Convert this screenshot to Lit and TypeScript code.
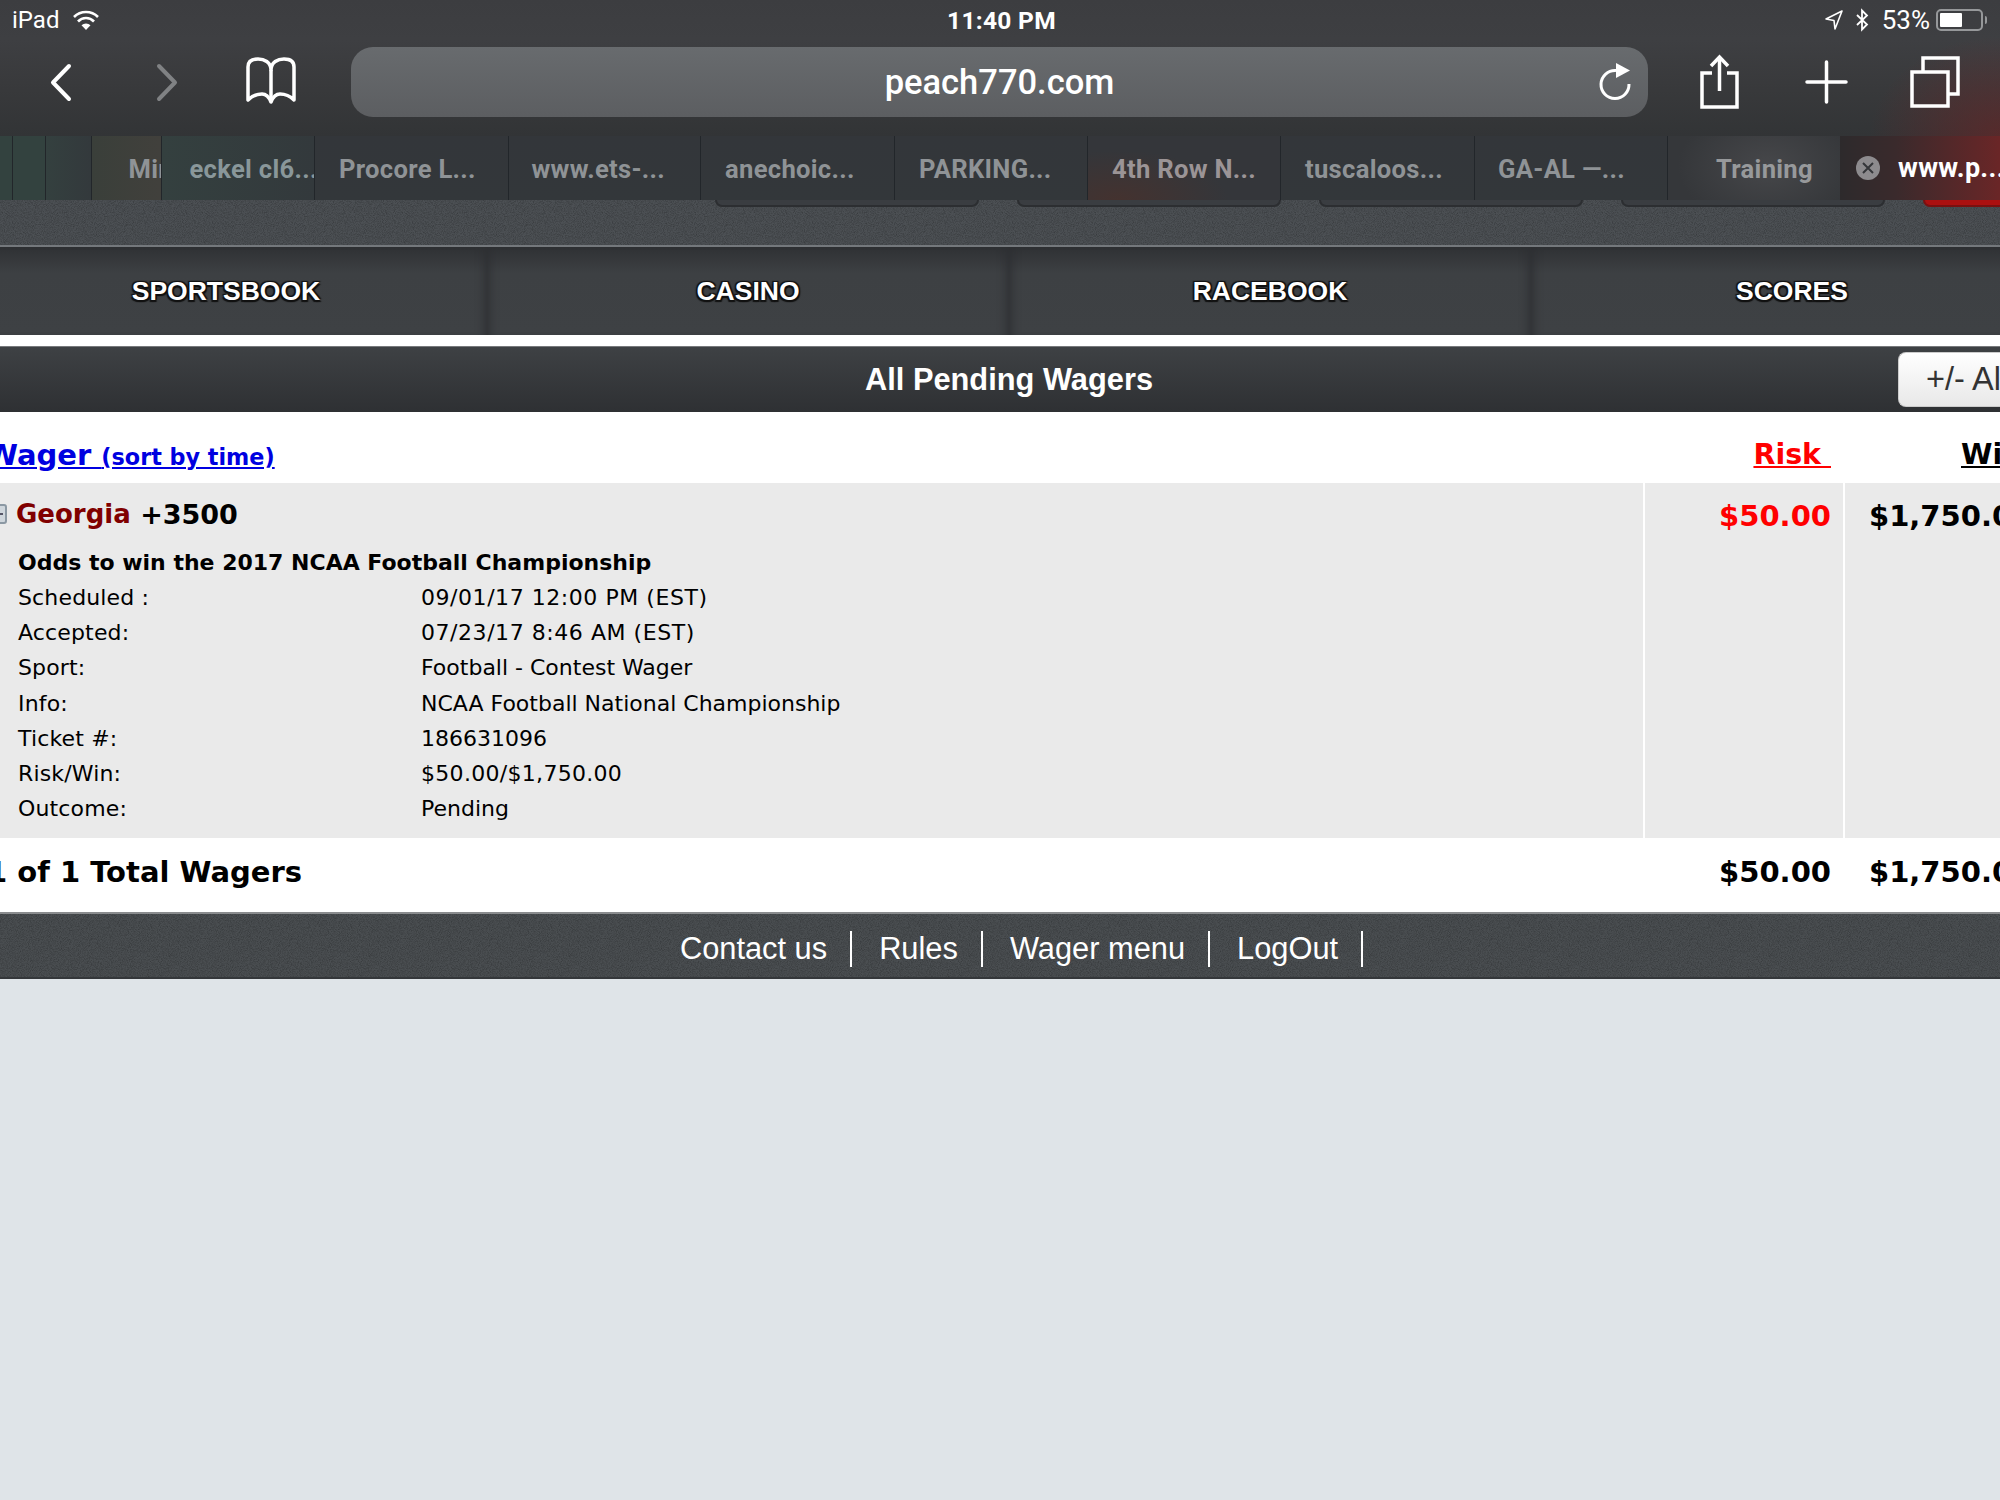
import { LitElement, html, css } from "lit";
import { customElement } from "lit/decorators.js";

interface Tab { text: string; w: number; pad: number; cls?: string; }

const TABS: Tab[] = [
  { text: "", w: 13, pad: 0, cls: "g1" },
  { text: "", w: 33, pad: 0, cls: "g1" },
  { text: "", w: 45.5, pad: 0, cls: "g2" },
  { text: "Mini", w: 70, pad: 37, cls: "g3" },
  { text: "eckel cl6...", w: 153.5, pad: 28, cls: "g2" },
  { text: "Procore L...", w: 193.5, pad: 24 },
  { text: "www.ets-...", w: 192.5, pad: 23 },
  { text: "anechoic...", w: 194, pad: 24 },
  { text: "PARKING...", w: 193, pad: 24 },
  { text: "4th Row N...", w: 193, pad: 24, cls: "r1" },
  { text: "tuscaloos...", w: 194, pad: 24 },
  { text: "GA-AL —...", w: 193, pad: 23 },
  { text: "Training", w: 172, pad: 48, cls: "lit" },
];

const DETAILS: [string, string, string][] = [
  ["Scheduled :", "09/01/17 12:00 PM (EST)", "date"],
  ["Accepted:", "07/23/17 8:46 AM (EST)", "date"],
  ["Sport:", "Football - Contest Wager", ""],
  ["Info:", "NCAA Football National Championship", ""],
  ["Ticket #:", "186631096", ""],
  ["Risk/Win:", "$50.00/$1,750.00", "money"],
  ["Outcome:", "Pending", ""],
];

@customElement("app-root")
export class AppRoot extends LitElement {
  static styles = css`
    :host { display: block; width: 2000px; height: 1500px; overflow: hidden; background: #dfe4e8; font-family: "DejaVu Sans", sans-serif; color: #000; }
    svg { display: block; flex: none; overflow: visible; }

    .chrome { background:
        radial-gradient(ellipse 130px 100px at 2000px 136px, rgba(130,30,30,.45), rgba(130,30,30,0)),
        linear-gradient(#3c3d40 0, #3e3f42 40px, #38393b 90px, #323436 136px); color: #fff; font-family: Inter, Roboto, sans-serif; }
    .status { height: 40px; display: grid; grid-template-columns: 1fr auto 1fr; align-items: center; padding: 0 13px 0 12px; font-size: 24px; font-family: Roboto, sans-serif; }
    .status-l, .status-r { display: flex; align-items: center; }
    .status-l { gap: 13px; }
    .status-r { justify-content: flex-end; }
    .time { font-weight: 700; font-size: 24.5px; letter-spacing: .3px; padding-left: 4px; }
    .pct { margin: 0 6px 0 13px; font-size: 26px; }
    .bt { margin-left: 12px; }
    .batt { width: 47px; height: 22px; box-sizing: border-box; border: 2px solid #96989a; border-radius: 5px; padding: 2px; }
    .batt div { width: 22px; height: 14px; background: #fff; border-radius: 1px; }
    .tip { width: 2px; height: 8px; background: #96989a; margin-left: 2px; border-radius: 0 2px 2px 0; }

    .toolbar { height: 96px; box-sizing: border-box; display: flex; align-items: center; padding: 0 0 12px 50px; }
    .fwd { margin-left: 84px; }
    .book { margin-left: 67px; }
    .url { width: 1297px; height: 70px; margin-left: 54px; flex: none; border-radius: 22px; background: linear-gradient(#686b6e, #5c5e61); display: flex; align-items: center; justify-content: center; position: relative; font-size: 34.5px; font-weight: 500; font-family: Roboto, sans-serif; }
    .reload { position: absolute; left: 1248px; top: 16px; }
    .share { margin-left: 52px; }
    .plus { margin-left: 66px; }
    .tabsi { margin-left: 62px; }

    .tabs { height: 64px; display: flex; font-size: 25.6px; font-weight: 700; font-family: Roboto, sans-serif; letter-spacing: .3px; }
    .tab { flex: none; box-sizing: border-box; border-right: 1px solid #22262a; background: linear-gradient(#33363a, #33373a); color: #8f9396; line-height: 66px; white-space: nowrap; overflow: hidden; }
    .tab.g1 { background: #33423f; }
    .tab.g2 { background: linear-gradient(90deg, #34403f, #33393c); color: #89979a; }
    .tab.g3 { background: linear-gradient(90deg, #3a3f3a, #41403c); color: #8f9396; }
    .tab.r1 { background: radial-gradient(ellipse 110px 50px at 30px 64px, #44322f, #34363a); color: #9b9496; }
    .tab.lit { background: radial-gradient(ellipse 90px 60px at 100px 30px, #46474a, #35373a); border-right: none; color: #97999b; }
    .active { flex: 1; min-width: 0; display: flex; align-items: center; gap: 18px; padding-left: 16px; font-size: 27px; color: #fff; overflow: hidden; white-space: nowrap; background: linear-gradient(90deg, #2d2a2c, #3a2a2c 35%, #6a2627); }

    .strip { height: 45px; box-sizing: border-box; display: flex; gap: 38px; padding-left: 715px; overflow: hidden; background: #4c5054; background-image: url("data:image/svg+xml,%3Csvg xmlns='http://www.w3.org/2000/svg' width='200' height='200'%3E%3Cfilter id='n'%3E%3CfeTurbulence type='fractalNoise' baseFrequency='1.1' numOctaves='2'/%3E%3CfeColorMatrix values='0 0 0 0 0 0 0 0 0 0 0 0 0 0 0 .5 0 0 0 -.18'/%3E%3C/filter%3E%3Crect width='200' height='200' filter='url(%23n)'/%3E%3C/svg%3E"); }
    .tail { flex: none; width: 264px; height: 7px; box-sizing: border-box; background: #3a3d41; border: 2px solid #2c2e31; border-top: none; border-radius: 0 0 10px 10px; }
    .tail.red { background: #ab1010; border-color: #7a1010; }
    .rule { height: 2px; background: #74787c; }

    .page { width: 2088px; margin-left: -35px; }
    .nav { height: 88px; display: grid; grid-template-columns: repeat(4, 522px); background: linear-gradient(#2f3134, #3d4043 30%, #3e4144); }
    .nav div { display: flex; align-items: center; justify-content: center; color: #fff; font: 700 26.5px "Liberation Sans", Arial, sans-serif; text-shadow: -1.5px -1.5px 1px #111, 1.5px -1.5px 1px #111, -1.5px 1.5px 1px #111, 1.5px 1.5px 1px #111; box-shadow: inset -10px 0 10px -8px #2d2f32, inset 10px 0 10px -8px #2d2f32; }
    .gap { height: 11px; background: #fff; }

    .title { height: 66px; box-sizing: border-box; display: grid; grid-template-columns: 1fr auto 1fr; align-items: center; border-top: 1px solid #77797c; background: linear-gradient(#3e4144, #2e3033); color: #fff; font: 700 30.8px "Liberation Sans", Arial, sans-serif; }
    .title h1 { grid-column: 2; margin: 0; font: inherit; }
    .btn { grid-column: 3; justify-self: end; box-sizing: border-box; width: 155px; height: 55px; padding: 0 0 0 27px; border: 1px solid #ccc; border-right: none; border-radius: 8px 0 0 8px; background: linear-gradient(#fff, #e8e8e8); color: #333; font: 400 32.5px "Liberation Sans", Arial, sans-serif; text-align: left; white-space: nowrap; overflow: hidden; }

    .cols { display: grid; grid-template-columns: 1678px 198px 208px; column-gap: 2px; }
    .head { height: 71px; background: #fff; align-items: center; padding-top: 14px; box-sizing: border-box; }
    .head a { text-decoration: underline; font-weight: 700; white-space: nowrap; }
    .wager { color: #0000e0; font-size: 29px; margin-left: 21px; }
    .sort { color: #0000e0; font-size: 22.3px; }
    .risk { color: #f00; font-size: 28.5px; text-align: right; padding-right: 12px; text-decoration-color: #f00; justify-self: end; }
    .win { font-size: 28.5px; color: #000; padding-left: 116px; }

    .row { background: #fff; }
    .row > div { background: #eaeaea; height: 355px; }
    .main { padding: 0 0 0 27px; box-sizing: border-box; }
    .line1 { display: flex; align-items: center; height: 62px; font-size: 26px; font-weight: 700; white-space: pre; }
    .exp { width: 15px; height: 20px; box-sizing: border-box; border: 2px solid #8b98a3; border-radius: 3px; background: #cfd6dc; margin-right: 9px; flex: none; display: flex; align-items: center; justify-content: center; }
    .exp i { width: 7px; height: 2px; background: #556; display: block; }
    .team { color: #800000; }
    .odds { font-size: 27px; }
    .body { margin-left: 26px; font-size: 22px; }
    .desc { font-weight: 700; height: 35px; line-height: 35px; }
    .grid { display: grid; grid-template-columns: 403px 1fr; grid-auto-rows: 35.2px; align-items: center; }
    .k { letter-spacing: .15px; }
    .date { letter-spacing: .55px; }
    .money { letter-spacing: .3px; }
    .amt { font-size: 29px; font-weight: 700; line-height: 66px; white-space: nowrap; }
    .amt.r { text-align: right; padding-right: 12px; color: #f00; }
    .amt.w { padding-left: 24px; overflow: hidden; }

    .total { height: 74px; background: #fff; align-items: center; font-size: 29px; font-weight: 700; white-space: nowrap; padding-bottom: 6px; box-sizing: border-box; }
    .total .t { padding-left: 22px; }
    .total .r { text-align: right; padding-right: 12px; }
    .total .w { padding-left: 24px; overflow: hidden; }

    .foot { height: 67px; box-sizing: border-box; padding: 6px 2px 0 0; border-top: 2px solid #8a8c8e; border-bottom: 2px solid #34373a; background: #4a4e51; background-image: url("data:image/svg+xml,%3Csvg xmlns='http://www.w3.org/2000/svg' width='200' height='200'%3E%3Cfilter id='n'%3E%3CfeTurbulence type='fractalNoise' baseFrequency='1.1' numOctaves='2'/%3E%3CfeColorMatrix values='0 0 0 0 0 0 0 0 0 0 0 0 0 0 0 .5 0 0 0 -.18'/%3E%3C/filter%3E%3Crect width='200' height='200' filter='url(%23n)'/%3E%3C/svg%3E"); display: flex; justify-content: center; align-items: center; color: #fff; font: 400 30.8px "Liberation Sans", Arial, sans-serif; }
    .foot span { display: flex; align-items: center; height: 36px; padding: 0 23px 0 27px; border-right: 2px solid #fff; white-space: nowrap; }
  `;

  render() {
    return html`
      <div class="chrome">
        <div class="status">
          <div class="status-l">
            <span>iPad</span>
            <svg width="28" height="20" viewBox="0 0 28 20" fill="none" stroke="#fff" stroke-width="2.6"><path d="M2 7A17 17 0 0 1 26 7"/><path d="M6 11.5A11 11 0 0 1 22 11.5"/><path d="M14 20L9.5 15.2A6.5 6.5 0 0 1 18.5 15.2Z" fill="#fff" stroke="none"/></svg>
          </div>
          <div class="time">11:40 PM</div>
          <div class="status-r">
            <svg width="18" height="20" viewBox="0 0 18 20" fill="none" stroke="#fff" stroke-width="1.6" stroke-linejoin="round"><path d="M17 1L1 9L9 10.5L10 19Z"/></svg>
            <svg class="bt" width="14" height="22" viewBox="0 0 14 22" fill="none" stroke="#fff" stroke-width="1.8"><path d="M2 6L12 15.5L7 20.5V1.5L12 6.5L2 16"/></svg>
            <span class="pct">53%</span>
            <div class="batt"><div></div></div>
            <div class="tip"></div>
          </div>
        </div>
        <div class="toolbar">
          <svg width="22" height="37" viewBox="0 0 22 37" fill="none" stroke="#fff" stroke-width="4" stroke-linecap="round" stroke-linejoin="round"><path d="M19 2L3 18.5L19 35"/></svg>
          <svg class="fwd" width="22" height="37" viewBox="0 0 22 37" fill="none" stroke="#808284" stroke-width="4" stroke-linecap="round" stroke-linejoin="round"><path d="M3 2L19 18.5L3 35"/></svg>
          <svg class="book" width="52" height="50" viewBox="0 0 52 50" fill="none" stroke="#fff" stroke-width="3.5" stroke-linejoin="round"><path d="M3 43V10C3 4 7 2 13 2C19 2 26 5 26 13C26 5 33 2 39 2C45 2 49 4 49 10V43C44 38 40 37 35 37C31 37 28 40 26 45C24 40 21 37 17 37C12 37 8 38 3 43Z"/><path d="M26 13V45"/></svg>
          <div class="url">peach770.com
            <svg class="reload" width="32" height="38" viewBox="0 0 32 38" fill="none" stroke="#fff" stroke-width="3"><path d="M17 7.5A14 14 0 1 0 30 21"/><polygon points="17,0 31,7.5 17,15" fill="#fff" stroke="none"/></svg>
          </div>
          <svg class="share" width="39" height="54" viewBox="0 0 39 54" fill="none" stroke="#fff" stroke-width="3.5"><path d="M12 18H2V52H37V18H27"/><path d="M19.5 36V3"/><path d="M11 11L19.5 2L28 11"/></svg>
          <svg class="plus" width="43" height="44" viewBox="0 0 43 44" fill="none" stroke="#fff" stroke-width="3.5" stroke-linecap="round"><path d="M21.5 2V42M2 22H41"/></svg>
          <svg class="tabsi" width="50" height="52" viewBox="0 0 50 52" fill="none" stroke="#fff" stroke-width="3.5"><rect x="2" y="16" width="36" height="34"/><path d="M13 15V2H48V38H39"/></svg>
        </div>
        <div class="tabs">
          ${TABS.map((t) => html`<div class="tab ${t.cls ?? ""}" style="width:${t.w}px;padding-left:${t.pad}px">${t.text}</div>`)}
          <div class="active">
            <svg width="24" height="24" viewBox="0 0 24 24" fill="none" stroke="#35363a" stroke-width="2"><circle cx="12" cy="12" r="12" fill="#8d8b8e" stroke="none"/><path d="M7 7L17 17M17 7L7 17"/></svg>
            <span>www.p...</span>
          </div>
        </div>
      </div>
      <div class="strip">
        <div class="tail"></div><div class="tail"></div><div class="tail"></div><div class="tail"></div><div class="tail red"></div>
      </div>
      <div class="rule"></div>
      <div class="page">
        <div class="nav"><div>SPORTSBOOK</div><div>CASINO</div><div>RACEBOOK</div><div>SCORES</div></div>
        <div class="gap"></div>
        <div class="title"><h1>All Pending Wagers</h1><button class="btn">+/- All</button></div>
        <div class="cols head">
          <div><a class="wager">Wager </a> <a class="sort">(sort by time)</a></div>
          <a class="risk">Risk&nbsp;</a>
          <a class="win">Win</a>
        </div>
        <div class="cols row">
          <div class="main">
            <div class="line1"><span class="exp"><i></i></span><span class="team">Georgia</span><span class="odds"> +3500</span></div>
            <div class="body">
              <div class="desc">Odds to win the 2017 NCAA Football Championship</div>
              <div class="grid">
                ${DETAILS.map(([k, v, c]) => html`<div class="k">${k}</div><div class=${c}>${v}</div>`)}
              </div>
            </div>
          </div>
          <div class="amt r">$50.00</div>
          <div class="amt w">$1,750.00</div>
        </div>
        <div class="cols total">
          <div class="t">1 of 1 Total Wagers</div>
          <div class="r">$50.00</div>
          <div class="w">$1,750.00</div>
        </div>
        <div class="foot"><span>Contact us</span><span>Rules</span><span>Wager menu</span><span>LogOut</span></div>
      </div>
    `;
  }
}
